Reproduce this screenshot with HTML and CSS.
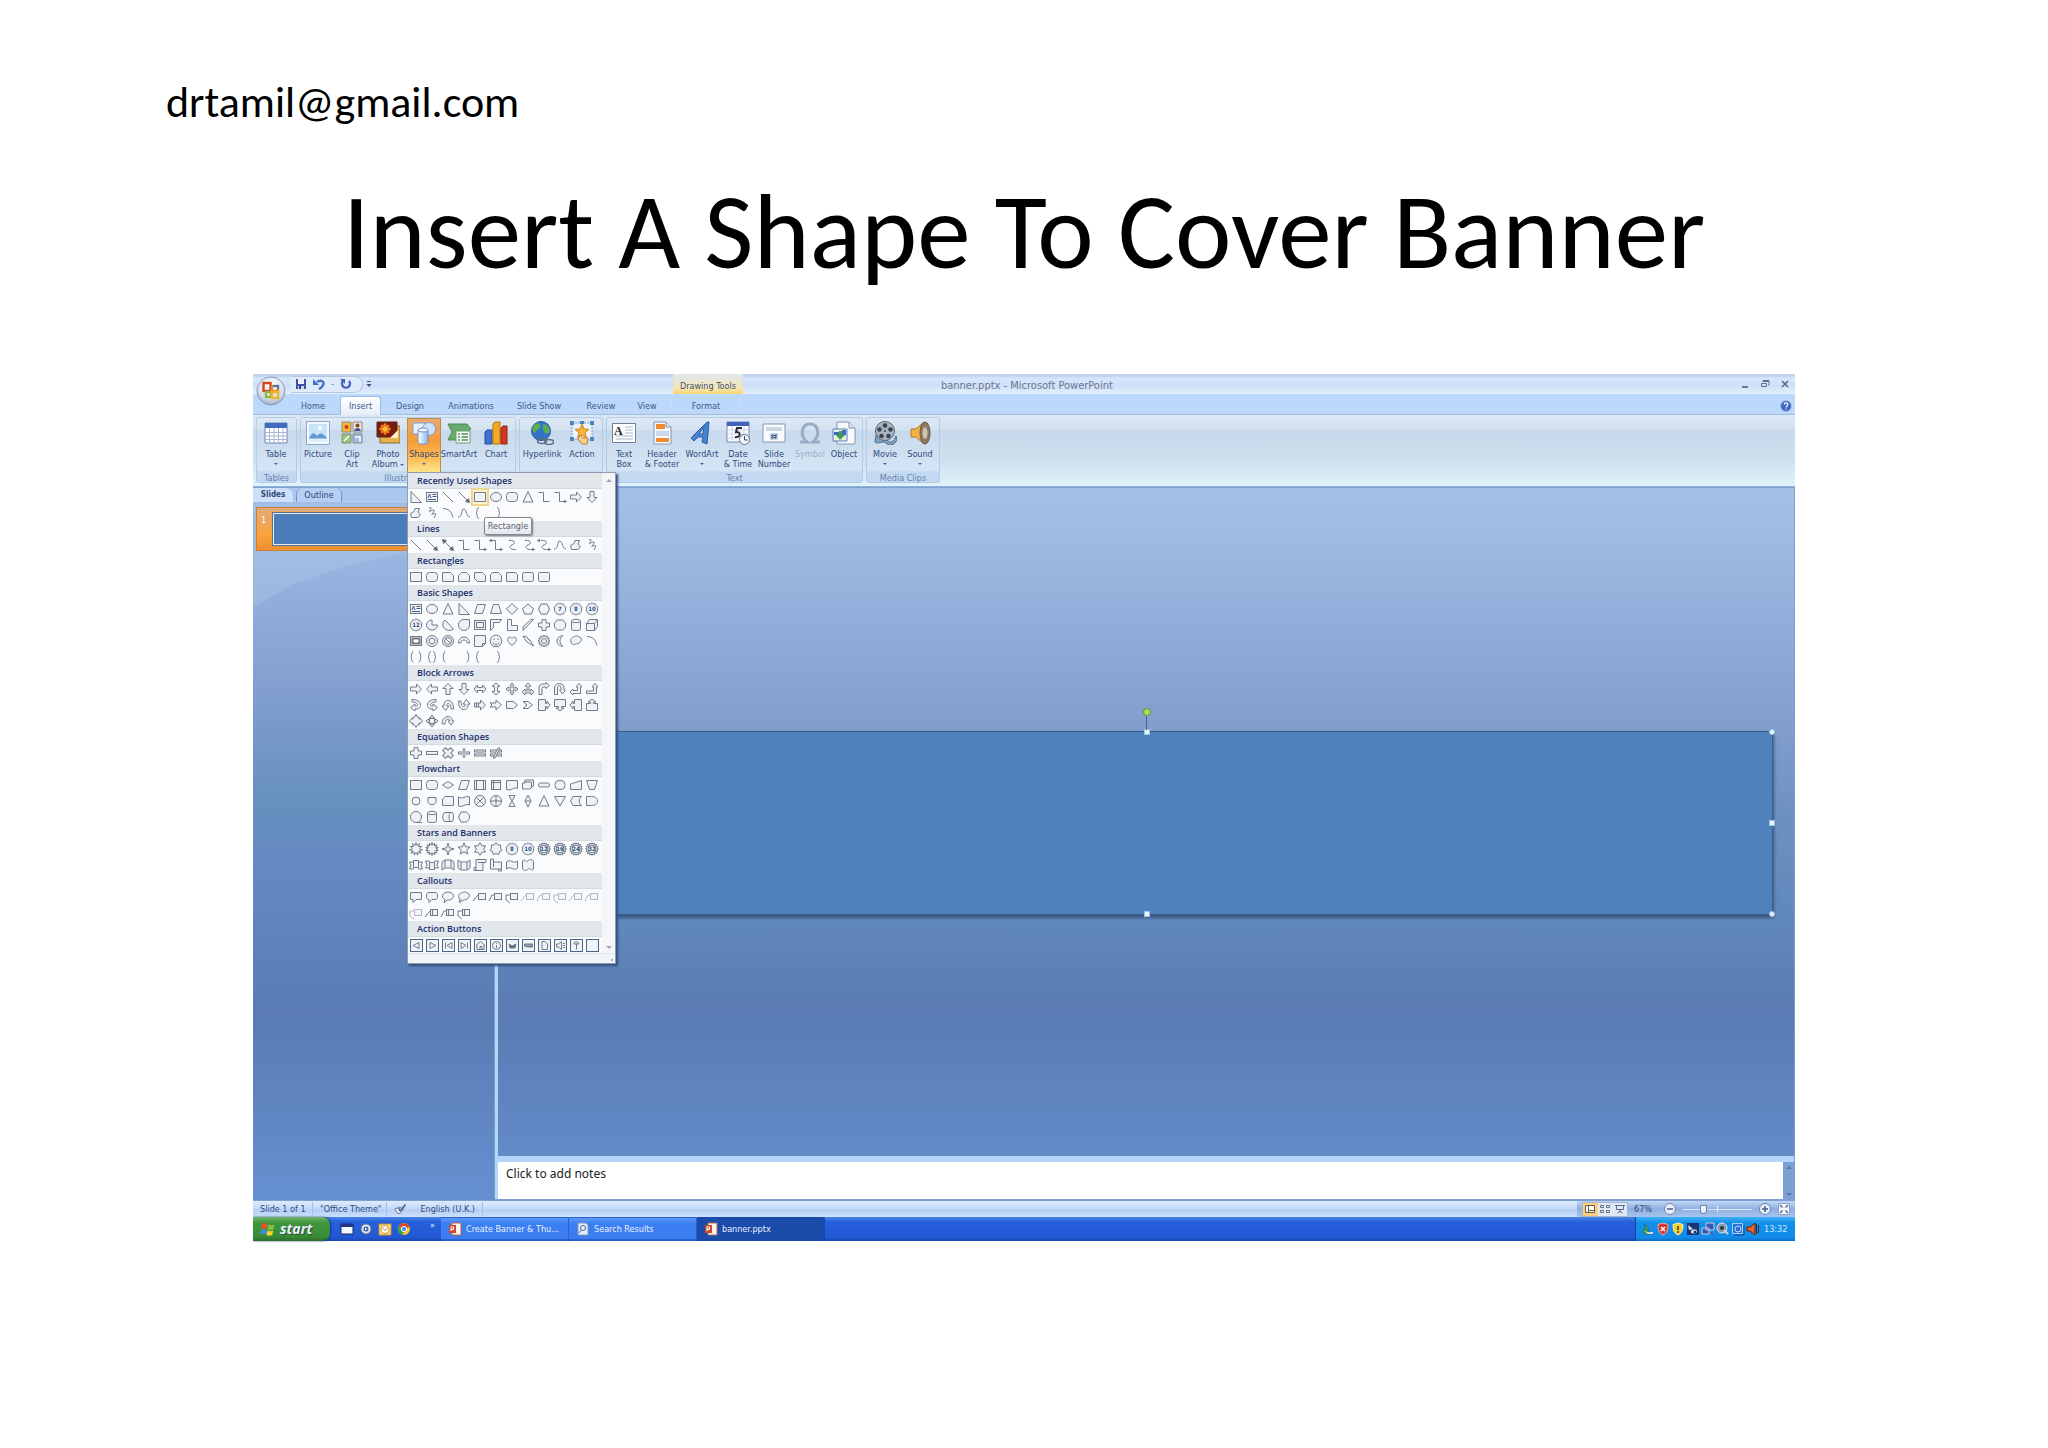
FILE: index.html
```html
<!DOCTYPE html>
<html lang="en">
<head>
<meta charset="utf-8">
<title>Insert A Shape To Cover Banner</title>
<link rel="stylesheet" href="styles.css">
</head>
<body>
<header class="page-head">
  <p class="contact">drtamil@gmail.com</p>
  <h1 class="headline">Insert A Shape To Cover Banner</h1>
</header>

<main class="window">
  <div class="titlebar">
    <button class="orb" aria-label="Office Button">
      <svg viewBox="0 0 30 30" width="30" height="30"><defs><radialGradient id="orb" cx=".5" cy=".3" r=".7"><stop offset="0" stop-color="#fff"/><stop offset=".7" stop-color="#d5dcea"/><stop offset="1" stop-color="#98a8c4"/></radialGradient></defs><circle cx="15" cy="15" r="14" fill="url(#orb)" stroke="#8c9dbb"/><g fill="none" stroke-width="2.4"><rect x="7.500" y="7" width="7" height="8" stroke="#d8451c"/><rect x="16" y="10" width="6" height="5" stroke="#e98b20"/><rect x="10" y="16" width="5" height="5" stroke="#8fb63a"/><rect x="16" y="16" width="6" height="6" stroke="#e9b62c"/></g><path d="M17 10h5v3" fill="none" stroke="#3c78c8" stroke-width="2"/></svg>
    </button>
    <div class="quick">
      <button aria-label="Save"><svg viewBox="0 0 12 12" width="12" height="12"><path d="M1 1h10v10H1z" fill="#3f51a8"/><path d="M3 1h6v5H3z" fill="#eef2fb"/><path d="M3 8h6v3H3z" fill="#cdd6ea"/><path d="M4 8h2v3H4z" fill="#2c3a80"/></svg></button>
      <button aria-label="Undo"><svg viewBox="0 0 12 12" width="12" height="12"><path d="M4 4c4-3 8 0 6 3-.6 1.500-2 3-4 4" fill="none" stroke="#4a6fc4" stroke-width="2.400"/><path d="M0 1v6h6z" fill="#4a6fc4"/></svg></button>
      <span class="dash">-</span>
      <button aria-label="Repeat"><svg viewBox="0 0 12 12" width="12" height="12"><path d="M3 3a4 4 0 1 0 6 0" fill="none" stroke="#4262c0" stroke-width="2.400"/><path d="M0 1h5v5z" fill="#4262c0"/></svg></button>
    </div>
    <button class="more" aria-label="Customize toolbar"><svg viewBox="0 0 8 8" width="8" height="8"><path d="M2 1.500h4" stroke="#35507c"/><path d="M1.500 4h5L4 7z" fill="#35507c"/></svg></button>
    <div class="context">Drawing Tools</div>
    <div class="doc-title">banner.pptx - Microsoft PowerPoint</div>
    <div class="win-buttons">
      <button aria-label="Minimize"><svg viewBox="0 0 10 10" width="10" height="10"><path d="M2 8h6" stroke="#47536b" stroke-width="1.500"/></svg></button>
      <button aria-label="Restore"><svg viewBox="0 0 10 10" width="10" height="10"><path d="M3 3V2h6v4H8M1.500 4.500h5v3h-5z" fill="none" stroke="#66718a"/><path d="M3 2h6" stroke="#66718a" stroke-width="2"/></svg></button>
      <button aria-label="Close"><svg viewBox="0 0 10 10" width="10" height="10"><path d="M2 2l6 6M8 2L2 8" stroke="#5a667f" stroke-width="1.500"/></svg></button>
    </div>
  </div>

  <nav class="tabs">
    <button>Home</button><button class="active">Insert</button><button class="t-design">Design</button><button class="t-anim">Animations</button><button class="t-show">Slide Show</button><button class="t-review">Review</button><button>View</button><button class="t-format">Format</button>
    <button class="help" aria-label="Help"><svg viewBox="0 0 12 12" width="12" height="12"><circle cx="6" cy="6" r="5.500" fill="#3c68c0" stroke="#a9c2ea"/><path d="M4.200 4.600c0-2.300 3.600-2.200 3.600 0C7.800 6 6 6 6 7.400M6 8.400v1.200" fill="none" stroke="#fff" stroke-width="1.200"/></svg></button>
  </nav>

  <div class="ribbon">
    <section class="group g-tables">
      <div class="tools">
        <button class="w38"><svg viewBox="0 0 24 24"><path d="M1 2h22v20H1z" fill="#fff" stroke="#6b86b8"/><path d="M1 2h22v5H1z" fill="#3d6cc0"/><path d="M1 11.500h22M1 15h22M1 18.500h22M5.500 7v15M10 7v15M14.500 7v15M19 7v15" stroke="#a9b9d4"/></svg><span>Table</span><i class="caret"></i></button>
      </div>
      <div class="label">Tables</div>
    </section>
    <section class="group g-illus">
      <div class="tools">
        <button class="w34"><svg viewBox="0 0 24 24"><path d="M.5.5h23v23H.5z" fill="#f5f9ff" stroke="#8ba6cf"/><path d="M3 3h18v18H3z" fill="#c9e4f8"/><path d="M3 17c3-6 5-6 8-2 3-4 6-3 10 2v1H3z" fill="#5f9bd0"/><path d="M3 17.500h18V21H3z" fill="#dff0f8"/><circle cx="14" cy="7" r="2" fill="#fff"/></svg><span>Picture</span></button>
        <button class="w34"><svg viewBox="0 0 24 24"><g stroke="#8c8c7c"><path d="M2 1h9v10H2z" fill="#f6b438"/><path d="M13 1h9v10h-9z" fill="#f1e3d0"/><path d="M2 13h9v9H2z" fill="#8fc97a"/><path d="M13 13h9v9h-9z" fill="#9db8ee"/></g><circle cx="6.500" cy="6" r="2" fill="#d23c18"/><circle cx="17.500" cy="4.500" r="2" fill="#7c4a2c"/><path d="M14 10c1-4 6-4 7 0z" fill="#3458a8"/><path d="M4 20l5-5M15 16h5v5" stroke="#fff" fill="none" stroke-width="1.500"/></svg><span>Clip<br>Art</span></button>
        <button class="w38"><svg viewBox="0 0 24 24"><path d="M4 5h20v17H4z" fill="#e9b24c" stroke="#8c6a3a"/><path d="M1 1h20v15H1z" fill="#7a1d10" stroke="#5c2414"/><circle cx="9" cy="8" r="5" fill="#e8541a"/><circle cx="9" cy="8" r="2.500" fill="#ffd84a"/><path d="M9 2v12M3 8h12M5 4l8 8M13 4l-8 8" stroke="#f8b030"/><path d="M14 17l8-8v8z" fill="#fbf0d2"/></svg><span>Photo<br>Album <i class="caret inline"></i></span></button>
        <div class="menu-anchor">
          <button class="w34 pressed" aria-expanded="true"><svg viewBox="0 0 24 24"><defs><linearGradient id="cyl"><stop offset="0" stop-color="#fff"/><stop offset="1" stop-color="#8fb4e4"/></linearGradient></defs><path d="M1 2h12v11H1z" fill="#e6f0fc" stroke="#7e9fd0"/><circle cx="17" cy="8" r="6.500" fill="#cfe2f9" stroke="#7e9fd0"/><path d="M6 9v12c0 3 10 3 10 0V9z" fill="url(#cyl)" stroke="#6d92c9"/><ellipse cx="11" cy="9" rx="5" ry="2" fill="#f4f9ff" stroke="#6d92c9"/></svg><span>Shapes</span><i class="caret"></i></button>
          <div class="gallery">
            <div class="gallery-body">
              <div class="gallery-list" id="gallery"></div>
              <div class="gallery-scroll"><i class="up"></i><i class="down"></i></div>
            </div>
            <div class="gallery-grip"></div>
            <div class="tooltip" role="tooltip">Rectangle</div>
          </div>
        </div>
        <button class="w36"><svg viewBox="0 0 24 24"><path d="M1 3h19l4 5-4 3v8H1l4-8z" fill="#68ab6c" stroke="#4c8a55"/><path d="M9 10h14v12H9z" fill="#f4faf4" stroke="#6b9c70"/><path d="M11 13h2m1.500 0H21m-10 3h2m1.500 0H21m-10 3h2m1.500 0H21" stroke="#57905e" stroke-width="1.300"/></svg><span>SmartArt</span></button>
        <button class="w38"><svg viewBox="0 0 24 24"><path d="M1 11l2-2h5v14H1z" fill="#3f72cc" stroke="#274f9c"/><path d="M9 3l2-2h5v22H9z" fill="#f2aa22" stroke="#b8730a"/><path d="M17 7l2-2h4v18h-6z" fill="#d2381e" stroke="#96200e"/></svg><span>Chart</span></button>
      </div>
      <div class="label">Illustrations</div>
    </section>
    <section class="group g-links">
      <div class="tools">
        <button class="w44"><svg viewBox="0 0 24 24"><circle cx="11" cy="10" r="9.500" fill="#3273c8" stroke="#2a5ea8"/><path d="M5 3c4-2 6 0 5 3s-4 3-5 6c-3-2-4-5 0-9zM13 3c4 0 7 4 7 8l-4 2-3-4z" fill="#5cae4c"/><g stroke="#5f6f88" stroke-width="1.500"><ellipse cx="12" cy="20" rx="4.500" ry="2.500" fill="none"/><ellipse cx="19" cy="21" rx="4.500" ry="2.500" fill="none"/></g></svg><span>Hyperlink</span></button>
        <button class="w36"><svg viewBox="0 0 24 24"><path d="M2 2h20v16H2z" fill="#eaf2fc" stroke="#7a9cc9" stroke-dasharray="2 1"/><path d="M12 3l2 5 5 .4-4 3.300 1.500 5L12 14l-4.500 2.700 1.500-5-4-3.300L10 8z" fill="#fbb33b" stroke="#d5861b"/><g fill="#4c86c0"><path d="M0 0h4v4H0zM20 0h4v4h-4zM0 16h4v4H0zM20 16h4v4h-4zM10 0h4v3h-4z"/></g><path d="M10 14l3 3h5l-1 6h-5l-4-5z" fill="#f8d190" stroke="#b9812e"/></svg><span>Action</span></button>
      </div>
      <div class="label">Links</div>
    </section>
    <section class="group g-text">
      <div class="tools">
        <button class="w34"><svg viewBox="0 0 24 24"><path d="M.5 2.500h23v19H.5z" fill="#fff" stroke="#6d7f9c"/><path d="M13 6h8M13 9h8M13 12h8M4 15h17M4 18h17" stroke="#d2dae6" stroke-width="2"/><text x="2" y="14" class="glyph-a">A</text></svg><span>Text<br>Box</span></button>
        <button class="w42"><svg viewBox="0 0 24 24"><path d="M4 1h12l5 5v17H4z" fill="#f5f8fc" stroke="#8496b4"/><path d="M6 3h9v5H6zM6 17h13v4H6z" fill="#ef8c32"/><path d="M6 10h13v5H6z" fill="#ccd8ea"/><path d="M16 1v5h5" fill="#dfe8f5" stroke="#8496b4"/></svg><span>Header<br>&amp; Footer</span></button>
        <button class="w38"><svg viewBox="0 0 24 24"><path d="M1 17L17 1h2l-2 22-5-2 1-5H8l-4 4zm8-4h4l1-7z" fill="#4a83d0" stroke="#2c5da4"/></svg><span>WordArt</span><i class="caret"></i></button>
        <button class="w34"><svg viewBox="0 0 24 24"><path d="M1 1h22v20H1z" fill="#fdfdff" stroke="#7288b2"/><path d="M1 1h22v4H1z" fill="#3e62be"/><path d="M1 9h22M1 13h22M1 17h22M6 5v16M18 5v16" stroke="#cbd5e6"/><path d="M16 7h-5l-1 4c5-1 5 6-1 5" fill="none" stroke="#2a2a38" stroke-width="2"/><circle cx="18.500" cy="18.500" r="5" fill="#f3f6fb" stroke="#64748e"/><path d="M18.500 15v4h3" fill="none" stroke="#445"/></svg><span>Date<br>&amp; Time</span></button>
        <button class="w38"><svg viewBox="0 0 24 24"><path d="M1 3h22v18H1z" fill="#f8fafd" stroke="#8596b4"/><path d="M4 6h16v4H4z" fill="#ccd5e3"/><path d="M8 12h8v7H8z" fill="#c9d6ea"/><path d="M11 13l-1 5m4-5l-1 5M9 14.500h6M9 16.500h6" stroke="#50658c"/></svg><span>Slide<br>Number</span></button>
        <button class="w34" disabled><svg viewBox="0 0 24 24"><path d="M2 21h7c-8-7-5-18 3-18s11 11 3 18h7" fill="none" stroke="#98abc6" stroke-width="3"/></svg><span>Symbol</span></button>
        <button class="w34"><svg viewBox="0 0 24 24"><path d="M5 1h12l6 6v16H5z" fill="#f7f9fd" stroke="#8094b6"/><path d="M17 1v6h6" fill="#dce6f5" stroke="#8094b6"/><path d="M1 8h14v12H1z" fill="#e9f0e8" stroke="#5b7dbc"/><path d="M2 11h5v3H2zM10 9h4v5h-4z" fill="#3f6cc0"/><path d="M7 10h3v4h3l-5 5-4-5h3z" fill="#41a046"/></svg><span>Object</span></button>
      </div>
      <div class="label">Text</div>
    </section>
    <section class="group g-media">
      <div class="tools">
        <button class="w36"><svg viewBox="0 0 24 24"><path d="M3 14c3 6 8 1 11 5s7 2 9-4l1 4c-3 6-8 6-11 3s-8 2-11-1z" fill="#7fa3c0" stroke="#4a6d8c"/><circle cx="12" cy="10" r="9.500" fill="#aab4c0" stroke="#5d6877"/><g fill="#39424f"><circle cx="12" cy="4.500" r="2.300"/><circle cx="6.500" cy="8.500" r="2.300"/><circle cx="17.500" cy="8.500" r="2.300"/><circle cx="8.500" cy="15" r="2.300"/><circle cx="15.500" cy="15" r="2.300"/><circle cx="12" cy="10" r="1"/></g></svg><span>Movie</span><i class="caret"></i></button>
        <button class="w34"><svg viewBox="0 0 24 24"><path d="M3 8h5l8-7v22l-8-7H3z" fill="#f1b440" stroke="#b07a22"/><ellipse cx="17" cy="12" rx="5" ry="11" fill="#8b7b66" stroke="#655846"/><ellipse cx="17" cy="12" rx="2.500" ry="6" fill="#d0c3ac"/></svg><span>Sound</span><i class="caret"></i></button>
      </div>
      <div class="label">Media Clips</div>
    </section>
  </div>

  <div class="workspace">
    <aside class="slides-pane">
      <div class="pane-tabs"><button class="active">Slides</button><button>Outline</button></div>
      <div class="slide-item"><span class="number">1</span><div class="thumb"></div></div>
    </aside>
    <div class="editor">
      <div class="canvas">
        <div class="shape">
          <i class="handle n"></i><i class="handle ne"></i><i class="handle e"></i><i class="handle se"></i><i class="handle s"></i><i class="rotate"></i>
        </div>
      </div>
      <div class="notes"><textarea aria-label="Notes">Click to add notes</textarea><div class="notes-scroll"><i class="up"></i><i class="down"></i></div></div>
    </div>
  </div>

  <div class="statusbar">
    <span class="cell c-slide">Slide 1 of 1</span>
    <span class="cell c-theme">"Office Theme"</span>
    <span class="cell c-lang"><svg viewBox="0 0 14 12" width="14" height="12"><path d="M1 6l5-2 5 2-4 5H4z" fill="#e6edf8" stroke="#5f7096"/><path d="M5 5l2 3 6-7" fill="none" stroke="#44557e" stroke-width="1.600"/></svg>English (U.K.)</span>
    <div class="status-right">
      <div class="views">
        <button class="on" aria-label="Normal"><svg viewBox="0 0 12 10" width="12" height="10"><path d="M1.500 1.500h9v7h-9zM4.500 1.500v7M4.500 6.500h6" fill="#fff" stroke="#6a5a48"/></svg></button>
        <button aria-label="Slide Sorter"><svg viewBox="0 0 12 10" width="12" height="10"><path d="M1.500 1.500h3v2h-3zM7.500 1.500h3v2h-3zM1.500 6.500h3v2h-3zM7.500 6.500h3v2h-3z" fill="#fff" stroke="#5c6c8a"/></svg></button>
        <button aria-label="Slide Show"><svg viewBox="0 0 12 10" width="12" height="10"><path d="M1 1.500h10M2.500 1.500v4h7v-4M6 5.500v2M3.500 9L6 7.500 8.500 9" fill="none" stroke="#5c6c8a"/></svg></button>
      </div>
      <span class="percent">67%</span>
      <button class="zoom-btn" aria-label="Zoom out"><svg viewBox="0 0 12 12" width="12" height="12"><circle cx="6" cy="6" r="5.500" fill="#e7effb" stroke="#6c82ad"/><path d="M3 6h6" stroke="#46598a" stroke-width="1.500"/></svg></button>
      <input class="zoom-range" type="range" min="0" max="100" value="28" aria-label="Zoom">
      <button class="zoom-btn" aria-label="Zoom in"><svg viewBox="0 0 12 12" width="12" height="12"><circle cx="6" cy="6" r="5.500" fill="#e7effb" stroke="#6c82ad"/><path d="M3 6h6M6 3v6" stroke="#46598a" stroke-width="1.500"/></svg></button>
      <button class="zoom-btn fit" aria-label="Fit slide"><svg viewBox="0 0 12 12" width="12" height="12"><path d="M.5.5h11v11H.5z" fill="#f2f6fc" stroke="#8fa1c4"/><path d="M2 2l2.500 2.500M10 2L7.500 4.500M2 10l2.500-2.500M10 10L7.500 7.500" stroke="#4b5f8c" stroke-width="1.300"/></svg></button>
    </div>
  </div>

  <footer class="taskbar">
    <button class="start"><svg viewBox="0 0 16 16" width="16" height="16"><path d="M2 3c2-1.500 4-1 5.500 0l-1 5C5 7 3 7 1 8z" fill="#e8532a"/><path d="M8.500 3.500c2 1 4 1 6 0l-1 5c-2 1-4 1-6 0z" fill="#7cc043"/><path d="M1 9c2-1 4-1 5.500 0l-1 4.500c-2-1-3.500-1-5 0z" fill="#3f8bea"/><path d="M7.300 9.500c2 1 4 1 6 0l-1 4.500c-2 1-4 1-6 0z" fill="#f8cf3a"/></svg>start</button>
    <div class="launch">
      <button aria-label="Show desktop"><svg viewBox="0 0 14 14" width="14" height="14"><path d="M1 2h12v10H1z" fill="#f4f7ff" stroke="#1b2c66"/><path d="M1 2h12v3H1z" fill="#22357c"/></svg></button>
      <button aria-label="Media player"><svg viewBox="0 0 14 14" width="14" height="14"><circle cx="7" cy="7" r="5" fill="#dfe6ee" stroke="#6a7488"/><circle cx="7" cy="7" r="2.500" fill="#31549c"/><path d="M6 5.500L8.500 7 6 8.500z" fill="#fff"/></svg></button>
      <button aria-label="Mail"><svg viewBox="0 0 14 14" width="14" height="14"><path d="M1 2h12v11H1z" fill="#f6d989" stroke="#c68f2c"/><circle cx="7" cy="7.500" r="4" fill="#fff" stroke="#d99a28"/><path d="M4.500 6L7 8.500 9.500 6" fill="none" stroke="#b77a1c"/></svg></button>
      <button aria-label="Browser"><svg viewBox="0 0 14 14" width="14" height="14"><circle cx="7" cy="7" r="6" fill="#f3c72f"/><path d="M7 7L1.500 4.500A6 6 0 0 1 12.500 5z" fill="#dc4332"/><path d="M7 7l-1 6A6 6 0 0 1 1.500 4.500z" fill="#3ea14c"/><circle cx="7" cy="7" r="2.600" fill="#4a8af0" stroke="#fff"/></svg></button>
      <span class="chev">»</span>
    </div>
    <button class="task"><svg viewBox="0 0 14 14" width="14" height="14"><path d="M4 1h9v12H4z" fill="#fbf3ee" stroke="#b9694a"/><path d="M1 3h7v8H1z" fill="#d04a2a"/><path d="M3 9V5h2.500v2.500H3" fill="none" stroke="#fff"/></svg><span>Create Banner &amp; Thu...</span></button>
    <button class="task"><svg viewBox="0 0 14 14" width="14" height="14"><path d="M2 1h8l2 2v10H2z" fill="#e4edfa" stroke="#8297bc"/><circle cx="7" cy="6" r="2.500" fill="none" stroke="#4a6aa4"/><path d="M5 8l-2 3" stroke="#4a6aa4"/></svg><span>Search Results</span></button>
    <button class="task current"><svg viewBox="0 0 14 14" width="14" height="14"><path d="M4 1h9v12H4z" fill="#fbf3ee" stroke="#b9694a"/><path d="M1 3h7v8H1z" fill="#d04a2a"/><path d="M3 9V5h2.500v2.500H3" fill="none" stroke="#fff"/></svg><span>banner.pptx</span></button>
    <div class="tray">
      <svg viewBox="0 0 14 14"><path d="M3 2l5 5-3 1 6 4H4L2 8l3-1z" fill="#5fc069" stroke="#2c6b45"/><path d="M6 10h6v2H6z" fill="#cfd8e4"/></svg>
      <svg viewBox="0 0 14 14"><path d="M7 1l5 1.500C12 8 11 11 7 13 3 11 2 8 2 2.500z" fill="#d8342c" stroke="#f0b0aa"/><path d="M5 5l4 4M9 5L5 9" stroke="#fff" stroke-width="1.500"/></svg>
      <svg viewBox="0 0 14 14"><path d="M7 1l5 1.500C12 8 11 11 7 13 3 11 2 8 2 2.500z" fill="#f5d12e" stroke="#fbeeb0"/><path d="M7 4v4M7 9v2" stroke="#44390a" stroke-width="1.500"/></svg>
      <svg viewBox="0 0 14 14"><path d="M1 1h12v12H1z" fill="#1d3470"/><path d="M2 3l5 4-4 1zM5 9a3 2 0 1 0 6 1 3 2 0 1 0-6-1" fill="#dfe8f6"/><circle cx="9" cy="10" r="1.500" fill="#1d3470"/></svg>
      <svg viewBox="0 0 14 14"><path d="M5 1h8v7H5zM1 6h7v6H1z" fill="#3556b8" stroke="#c6d2ea"/><path d="M9 10l3 2" stroke="#b33"/></svg>
      <svg viewBox="0 0 14 14"><circle cx="6" cy="6" r="5" fill="#8a97a6" stroke="#e3e8ee"/><circle cx="6" cy="6" r="2" fill="#2d3948"/><path d="M8 8l4 4" stroke="#cfd6df" stroke-width="2"/></svg>
      <svg viewBox="0 0 14 14"><path d="M1.500 1.500h10v10h-10z" fill="#2b6fd6" stroke="#9fd2ff"/><circle cx="7" cy="7" r="3" fill="none" stroke="#bfe2ff"/><path d="M3 13h10V4" fill="none" stroke="#1b3f8c"/></svg>
      <svg viewBox="0 0 14 14"><path d="M1 5h3l5-4v12L4 9H1z" fill="#e8632e" stroke="#5c2410"/><path d="M10.500 2v10M12.500 3v8" stroke="#2c2c38"/></svg>
      <time>13:32</time>
    </div>
  </footer>
</main>
<script src="gallery.js"></script>
</body>
</html>
```
FILE: styles.css
```css
* { box-sizing: border-box; }
body { margin: 0; background: #fff; font-family: "DejaVu Sans Condensed", "DejaVu Sans", sans-serif; font-size: 9px; line-height: 10px; color: #2f4a80; }
button { margin: 0; padding: 0; border: 0; background: none; font: inherit; color: inherit; }
button svg { display: block; flex: none; }
i { font-style: normal; }

.page-head { height: 374px; padding: 78px 166px 0; font-family: Carlito, Lato, sans-serif; color: #000; }
.contact { margin: 0; font-size: 44px; line-height: 48px; }
.headline { margin: 46px 0 0; font-size: 107px; line-height: 120px; font-weight: 400; text-align: center; white-space: nowrap; }

.window { margin: 0 253px 208px; }

.titlebar { position: relative; display: flex; align-items: center; height: 20px; background: linear-gradient(#bfd3ee 0, #bfd3ee 2px, #d6e6fa 4px, #cfdff8 12px, #e2f0fd); }
.orb { position: absolute; left: 3px; top: 2px; z-index: 2; }
.quick { display: flex; align-items: center; gap: 6px; height: 17px; margin-left: 38px; padding: 0 10px 0 4px; border: 1px solid #b3c8e6; border-left: 0; border-radius: 0 9px 9px 0; background: #dfebfa; }
.dash { color: #5b75a6; }
.more { margin-left: 2px; }
.context { align-self: stretch; margin-left: 300px; width: 70px; padding-top: 7px; text-align: center; background: linear-gradient(#dfe6ee, #f3e6b8 70%, #fbd66a); color: #47506a; }
.doc-title { margin: 3px 0 0 198px; font-size: 11px; color: #6a7690; white-space: nowrap; }
.win-buttons { display: flex; gap: 10px; margin-left: auto; padding-right: 5px; }

.tabs { display: flex; align-items: flex-end; height: 21px; padding: 2px 3px 0 40px; background: #bcd8fb; border-bottom: 1px solid #9fbfe6; color: #41588a; }
.tabs button { width: 40px; height: 17px; }
.tabs .active { width: 41px; margin: 0 0 -1px 7px; height: 19px; border: 1px solid #9dbbe2; border-bottom: 0; border-radius: 3px 3px 0 0; background: linear-gradient(#fff, #e4eefa); }
.tabs .t-design { width: 58px; }
.tabs .t-anim { width: 64px; }
.tabs .t-show { width: 72px; }
.tabs .t-review { width: 52px; }
.tabs .t-format { width: 70px; margin-left: 4px; border: 1px solid #cddcf0; border-width: 0 1px; }
.tabs .help { width: 12px; margin-left: auto; }

.ribbon { display: flex; gap: 3px; height: 72px; padding: 2px 3px 3px; border-bottom: 1px solid #8fb2dd; background: linear-gradient(#dbe7f5 0, #d2e0f0 14px, #c6d8ea 16px, #d0e0f0 45px, #e0f2fb); }
.group { display: flex; flex-direction: column; border: 1px solid #b5cce6; border-radius: 3px; background: linear-gradient(#dde9f6 0, #d4e1f0 12px, #c7d9ec 13px, #d6e5f5 52px, #c3d9f1 54px, #c3d9f1); }
.g-tables { width: 41px; }
.g-illus { width: 216px; }
.g-links { width: 84px; }
.g-text { width: 257px; }
.g-media { width: 74px; }
.tools { display: flex; height: 54px; }
.tools > button, .menu-anchor > button { display: flex; flex-direction: column; align-items: center; height: 54px; padding-top: 3px; white-space: nowrap; }
.tools > button svg, .menu-anchor > button svg { width: 24px; height: 24px; margin-bottom: 4px; }
.tools > button:disabled { color: #9fb0ca; }
.label { height: 12px; line-height: 12px; text-align: center; color: #6482b0; }
.w34 { width: 34px; }
.w36 { width: 36px; }
.w38 { width: 38px; }
.w42 { width: 42px; }
.w44 { width: 44px; }
.menu-anchor > .pressed { border: 1px solid #b98d4f; border-bottom: 0; padding-top: 2px; background: linear-gradient(#e9a96c, #f89a3a 40%, #fdb64e 70%, #fde58a); }
.caret { width: 0; height: 0; margin-top: 4px; border: 2px solid transparent; border-top-color: #47629a; border-bottom: 0; }
.caret.inline { display: inline-block; vertical-align: middle; margin: 0; }
.glyph-a { font: bold 12px "Liberation Serif", serif; fill: #222; }

.menu-anchor { position: relative; }
.gallery { position: absolute; left: 0; top: 54px; z-index: 5; width: 209px; border: 1px solid #8f9bb0; background: #fafbfc; box-shadow: 2px 2px 2px #33507f; }
.gallery-body { display: flex; }
.gallery-list { width: 194px; }
.gallery h2 { margin: 0; padding-left: 9px; height: 16px; font: 600 9px/16px "Open Sans", sans-serif; color: #1c2f70; background: #e2e7ec; border-bottom: 1px solid #d3dae2; }
.cells { display: grid; grid-template-columns: repeat(12, 16px); grid-auto-rows: 16px; }
.cells button { width: 16px; height: 16px; }
.cells svg { width: 16px; height: 16px; fill: #edf3f9; stroke: #737b88; stroke-width: 1; }
.cells text { font: bold 6px "DejaVu Sans Condensed", sans-serif; fill: #2c5078; stroke: none; text-anchor: middle; }
.cells .selected { outline: 2px solid #ecd590; outline-offset: -1px; background: #fdf3cf; }
.gallery-scroll { flex: 1; display: flex; flex-direction: column; justify-content: space-between; align-items: center; padding: 6px 0 4px; background: #f3f5f7; }
.up, .down { width: 0; height: 0; border: 3px solid transparent; }
.up { border-bottom-color: #9ba3af; border-top: 0; }
.down { border-top-color: #9ba3af; border-bottom: 0; }
.gallery-grip { height: 10px; background: radial-gradient(circle, #a3abb8 1px, transparent 1px) right 1px bottom 1px / 4px 4px no-repeat, #f1f4f8; border-top: 1px solid #e0e5eb; }
.tooltip { position: absolute; left: 76px; top: 44px; width: 48px; height: 18px; border: 1px solid #85888f; border-radius: 2px; background: linear-gradient(#fff, #e2e6f0); box-shadow: 1px 1px 2px #777; font-size: 9px; line-height: 17px; text-align: center; color: #5b5f6a; }

.workspace { display: flex; height: 713px; background: linear-gradient(#a5c1ea 0, #8faad6 22%, #7f9ccb 35%, #6d90c2 46%, #6189bb 60%, #5a7bb3 74%, #6590d0); }
.slides-pane { position: relative; width: 241px; overflow: hidden; background: linear-gradient(#a5c1ea 0, #829fcf 28%, #6690bf 44%, #658ac2 52%, #5a7bb3 74%, #6590d0); }
.slides-pane::after { content: ""; position: absolute; left: 0; top: 64px; width: 160px; height: 56px; background: linear-gradient(#c4d8f533, #c4d8f533); clip-path: polygon(0 0, 100% 0, 60% 25%, 25% 60%, 0 100%); }
.pane-tabs { display: flex; height: 15px; background: #a9c6ee; border-top: 1px solid #7f9fce; border-bottom: 1px solid #bcd3f2; }
.pane-tabs button { width: 46px; height: 14px; color: #31487c; }
.pane-tabs button + button { border: 1px solid #7795c6; border-width: 0 1px; border-radius: 6px 6px 0 0; background: #b6cff2; }
.pane-tabs .active { width: 40px; background: #cfe1fa; font-weight: bold; font-size: 8px; border-radius: 0 8px 0 0; margin-right: 3px; }
.slide-item { display: flex; margin: 5px 0 0 3px; height: 44px; padding: 5px 0 5px 4px; border: 1px solid #c9803a; border-right: 0; background: linear-gradient(#e0a878, #fba23e 60%, #f09030); }
.number { width: 12px; padding-top: 2px; color: #fff; }
.thumb { flex: 1; border: 1px solid #e7edf5; outline: 1px solid #5a6f96; background: #4a7ebb; }
.editor { flex: 1; display: flex; flex-direction: column; border-left: 4px solid #b4d5f9; outline: 1px solid #7d9fcf; outline-offset: -1px; }
.canvas { flex: 1; padding: 244px 22px 0; }
.shape { position: relative; height: 184px; border: 1px solid #385d8a; background: #4f81bd; box-shadow: 1px 3px 3px #3c5780; }
.handle { position: absolute; width: 6px; height: 6px; background: #e3f6fd; border: 1px solid #9fc4dd; }
.n, .s { left: 50%; margin-left: -3px; }
.n, .ne { top: -3px; }
.s, .se { bottom: -3px; }
.ne, .e, .se { right: -3px; }
.e { top: 50%; margin-top: -3px; }
.ne, .se { border-radius: 50%; }
.rotate { position: absolute; left: 50%; top: -24px; width: 8px; height: 8px; margin-left: -4px; border: 1px solid #5b9438; border-radius: 50%; background: #a4e454; }
.rotate::after { content: ""; position: absolute; left: 2px; top: 7px; width: 1px; height: 14px; background: #4a648c; }
.notes { display: flex; height: 44px; border-top: 6px solid #b4d5f9; }
.notes textarea { flex: 1; border: 0; padding: 4px 8px; resize: none; overflow: hidden; background: #fff; font: 12px/16px "Noto Sans", sans-serif; color: #222; }
.notes-scroll { width: 12px; display: flex; flex-direction: column; justify-content: space-between; align-items: center; padding: 4px 0; background: #7b9fd0; }
.notes-scroll .up { border-bottom-color: #5579af; }
.notes-scroll .down { border-top-color: #5579af; }

.statusbar { display: flex; align-items: center; height: 17px; background: linear-gradient(#deebfc, #c3d8f8 50%, #b3cdf4 55%, #cfe0fb); border-top: 1px solid #7c9ed0; }
.cell { display: flex; align-items: center; gap: 14px; height: 14px; padding: 0 7px; border-right: 1px solid #a5bfe6; white-space: nowrap; }
.c-slide { width: 60px; }
.c-theme { width: 74px; }
.c-lang { width: 96px; }
.status-right { display: flex; align-items: center; height: 16px; width: 218px; margin-left: auto; padding: 0 5px; background: linear-gradient(#c2d7f6, #8eaee0 50%, #a9c5ef); }
.views { display: flex; width: 46px; border: 1px solid #a5b6d3; background: #dfe7f3; }
.views button { flex: 1; display: grid; place-items: center; height: 13px; }
.views .on { background: #fbcf7c; }
.percent { width: 36px; padding-left: 6px; }
.zoom-range { flex: 1; min-width: 0; height: 12px; margin: 0 7px; appearance: none; background: linear-gradient(#eef4fd, #eef4fd) center / 1px 6px no-repeat, linear-gradient(#dbe8fa, #dbe8fa) center / 100% 1px no-repeat; }
.zoom-range::-webkit-slider-thumb { appearance: none; width: 7px; height: 9px; border: 1px solid #6f83ad; border-radius: 1px 1px 4px 4px; background: #eaf1fb; }
.fit { margin-left: 7px; }

.taskbar { display: flex; align-items: stretch; height: 24px; background: linear-gradient(#4a86e4, #2560dc 20%, #2257d4 85%, #1b46b0); color: #e9f1ff; }
.start { display: flex; align-items: center; gap: 4px; width: 77px; padding-left: 7px; border-radius: 0 8px 8px 0; background: linear-gradient(#6fb56b, #3f963d 25%, #3a8c38 80%, #2c6d2c); box-shadow: 1px 0 2px #12347c; font: italic bold 14px/20px "Open Sans", sans-serif; text-shadow: 1px 1px 1px #234f23; }
.launch { display: flex; align-items: center; gap: 5px; width: 111px; padding-left: 10px; }
.chev { margin: 0 6px 8px auto; }
.task { display: flex; align-items: center; gap: 4px; width: 128px; padding-left: 7px; border: 1px solid #2a60cf; border-width: 1px 1px 2px 0; border-radius: 2px; background: linear-gradient(#5d9bf8, #3c7ff2 25%, #3b7cf0); white-space: nowrap; }
.task.current { background: #1c4cab; border-color: #1a48a6; }
.tray { display: flex; align-items: center; gap: 1px; width: 160px; margin-left: auto; padding-left: 5px; border-left: 1px solid #1042a0; background: linear-gradient(#3cb0f6, #1290e8 25%, #128bea 85%, #0f6fc4); color: #cfe6ff; }
.tray svg { width: 14px; height: 14px; flex: none; }
.tray time { margin-left: 3px; }
```
FILE: gallery.js
```js
// Shape outlines for the gallery, each drawn in a 16 by 16 box.
const p = (d, extra = '') => `<path d="${d}" ${extra}/>`;
const open = d => p(d, 'fill="none"');
const box = (x, y, w, h, r = 0) => `<rect x="${x}" y="${y}" width="${w}" height="${h}" rx="${r}"/>`;
const oval = (cx, cy, rx, ry, extra = '') => `<ellipse cx="${cx}" cy="${cy}" rx="${rx}" ry="${ry}" ${extra}/>`;
const burst = (n, outer, inner) => {
  const pts = [];
  for (let i = 0; i < n * 2; i++) {
    const r = i % 2 ? inner : outer, a = Math.PI * i / n - Math.PI / 2;
    pts.push((8 + r * Math.cos(a)).toFixed(1) + ',' + (8 + r * Math.sin(a)).toFixed(1));
  }
  return `<polygon points="${pts.join(' ')}"/>`;
};
const turn = (deg, s) => `<g transform="rotate(${deg} 8 8)">${s}</g>`;
const flip = s => `<g transform="matrix(-1 0 0 1 16 0)">${s}</g>`;
const num = n => burst(10, 6, 5.4) + `<text x="8" y="10">${n}</text>`;
const seal = n => burst(16, 6.4, 5) + oval(8, 8, 4, 4) + `<text x="8" y="10">${n}</text>`;

const line = open('M3 3l10 10'), head = p('M13.500 13.500l-4-1 3-3z', 'fill="#555c68"');
const lineArrow = line + head;
const doubleArrow = lineArrow + p('M2.500 2.500l4 1-3 3z', 'fill="#555c68"');
const elbow = open('M2.500 3.500h5v9h6');
const tip = p('M14.500 12.500l-2-1v2z', 'fill="#555c68"'), tail = p('M1.500 3.500l2-1v2z', 'fill="#555c68"');
const curl = open('M5 3.500c7-1 6 4 3 4.500s-3 5 4 4.500');
const triangle = p('M8 2.500l5 10.500h-10z'), rightTri = p('M3 2.500v11h10.500z');
const textBox = box(2.5, 3.5, 11, 9) + p('M4 9l1.500-4L7 9M8.500 5.500h4M8.500 7.500h4M4 10.500h8', 'stroke="#3e5f88"');
const ellipse = oval(8, 8, 5.5, 4.5), rounded = box(2.5, 3.5, 11, 9, 3), rect = box(2.5, 3.5, 11, 9);
const arrow = p('M2.500 6h6V3l5 5-5 5v-3h-6z');
const blob = p('M3.500 12.500l-1-4 3.500-2 1-3h4.500l-1.500 3.500 2.500 3-3 2.500z'), scribble = open('M5 3c5-2 0 4 0 4s6-4 5-1-4 4-1 3 4-1 1 4');
const arc = open('M3 3.500c6 0 9 4 10 9'), wave = open('M2 12c5 0 3-9 6-8s2 8 6 8');
const lb = open('M7 2.500c-3 0-1 5-3 5.500 2 .5 0 5.500 3 5.500'), rb = flip(lb);
const lp = open('M5.500 2.500c-3 1-3 10 0 11'), rp = flip(lp);
const hexa = p('M5 3h6l2.500 5-2.500 5H5L2.500 8z'), cross = p('M6 2.500h4V6h3.500v4H10v3.500H6V10H2.500V6H6z');
const can = p('M3.500 4v8c0 2 9 2 9 0V4') + oval(8, 4, 4.5, 1.7);
const two = p('M2 8l3.500-4v2.500h5V4L14 8l-3.500 4V9.500h-5V12z');
const four = p('M8 2l2 2.500H9V7h2.500V6L14 8l-2.500 2V9H9v2.500h1L8 14l-2-2.500h1V9H4.500v1L2 8l2.500-2v1H7V4.500H6z');
const bent = p('M3 13.500V7c0-3 2-4 4-4h3V1.500L13.500 4.500 10 7.500V6H8C6 6 6 7 6 8v5.500z');
const uturn = p('M2.500 13.500V7C2.500 1 12 1 12 7v2h1.500L10.500 13 7.500 9H9V7c0-3-3.500-3-3.500 0v6.500z');
const leftUp = p('M2 11l3-3v1.500h4.500V6H8l3-3.500L14 6h-1.500v6.500H5V14z');
const curved = p('M12 2.500C1 2 1 13 9 12v2l4.500-3.500L9 7v2C5 10 5 5 12 5z');
const callArrow = p('M2.500 2.500h7v4H11V4l3 4-3 4V9.500H9.500v4h-7z');
const doc = p('M2.500 3.500h11v8c-4-2-6 3-11 1z');
const callout = (s, tailPath) => s + open(tailPath);
const lineCall = k => box(6.5, 4.5, 7, 6) + open(k % 2 ? 'M6 6H4l-3 6' : 'M6 6l-5 6');
const faint = s => `<g opacity=".5">${s}</g>`;
const bentCall = box(6.5, 4.5, 7, 6) + open('M6 6H2v5l4 3');
const ribbon = p('M1.500 5h4V3.500h5V5h4l-1.500 3 1.500 4h-4v-1.500h-5V12h-4L3 8z') + open('M5.500 5v5M10.500 5v5');
const scroll = p('M4 2.500h10v3h-3v8H2v-3h2z') + open('M6 5.500h5M4 10.500v3');
const action = s => `<rect x="2.500" y="2.500" width="12" height="12" stroke="#4a6788"/>` + s;

const groups = {
  'Recently Used Shapes': [rightTri, textBox, line, lineArrow, rect, ellipse, rounded, triangle, elbow, elbow + tip, arrow, turn(90, arrow), blob, scribble, arc, wave, lb, rb],
  'Lines': [line, lineArrow, doubleArrow, elbow, elbow + tip, elbow + tip + tail, curl, curl + tip, curl + tip + tail, wave, blob, scribble],
  'Rectangles': [rect, rounded, p('M2.500 3.500h8l3 3v6h-11z'), p('M2.500 6.500l3-3h5l3 3v6h-11z'), p('M2.500 3.500h8l3 3v6h-8l-3-3z'), p('M2.500 5.500l2-2h6l3 3v6h-11z'), p('M2.500 3.500h9l2 2v7h-11z'), box(2.5, 3.5, 11, 9, 2), box(2.5, 3.5, 11, 9, 1)],
  'Basic Shapes': [textBox, ellipse, triangle, rightTri, p('M5.500 3.500h8l-3 9h-8z'), p('M5.500 3.500h5l3 9h-11z'), p('M8 2.500l5.500 5.500L8 13.500 2.500 8z'), p('M8 3l5.500 4.500-2 5.500h-7l-2-5.500z'), hexa, num(7), num(8), num(10),
    num(12), p('M8 3v5h5.500A5.500 5 0 1 1 8 3z'), p('M5 3a6 5.500 0 1 0 8.500 9z'), p('M13.500 2.500V8A5.500 5.500 0 1 1 8 2.500z'), box(2.5, 3.5, 11, 9) + box(4.5, 5.5, 7, 5), p('M2.500 2.500h11l-2 3h-6v5l-3 3z'), p('M3.500 2.500h4v6h6v5h-10z'), p('M11 2.500h2.500l-10.500 11V10z'), cross, p('M5 3h6l2.500 3v4L11 13H5l-2.500-3V6z'), can, p('M2.500 6.500h8v7h-8zM2.500 6.500l3-4h8v7l-3 4M10.500 6.500l3-4'),
    box(2.5, 3.5, 11, 9) + p('M4.500 5.500h7v5h-7z', 'fill="#fff" stroke-width="2"'), oval(8, 8, 5.5, 5.5) + oval(8, 8, 3, 3), oval(8, 8, 5.5, 5.5) + oval(8, 8, 3.5, 3.5) + open('M5.500 5.500l5 5'), p('M2.500 10c0-8 11-8 11 0h-2.500c0-4-6-4-6 0z'), p('M2.500 2.500h11v8l-3 3h-8zM10.500 13.500v-3h3'), oval(8, 8, 5.8, 5.8) + open('M5 9.500c1 3 5 3 6 0M6 5.500v1.500M10 5.500v1.500'), p('M8 12.500C0 7 5 1.500 8 5.500c3-4 8 1.500 0 7z'), p('M3 3l4 1 2 3 1 0 3.500 6-6.500-4-1-1z'), burst(12, 6, 4.2) + oval(8, 8, 2.5, 2.5), p('M11 2.500C3 3 3 13 11 13.500 7 11 7 5 11 2.500z'), p('M3 9C2 5 5 4 6 4c2-2 4-1 5 0 3 0 3 4 1 5-1 3-3 1-4 2-2 1-5 0-5-2z'), arc,
    lp + rp, lb + rb, lp, rp, lb, rb],
  'Block Arrows': [arrow, turn(180, arrow), turn(-90, arrow), turn(90, arrow), two, turn(90, two), four, p('M8 2l3 3H9v5h2V8l3 3-3 3v-2H5v2l-3-3 3-3v2h2V5H5z'), bent, uturn, leftUp, p('M2.500 10h7V6H8L11 2.500 14 6h-1.500v6.500h-10z'),
    flip(curved), curved, turn(90, curved), turn(-90, curved), arrow + open('M4.500 6v4M6.500 6v4'), p('M2 6h6V3l5.500 5L8 13v-3H2l2-2z'), p('M2.500 4.500h7L13.500 8l-4 3.500h-7z'), p('M3 4.500h5L12.500 8 8 11.500H3L7 8z'), callArrow, turn(90, callArrow), turn(180, callArrow), turn(-90, callArrow),
    p('M5 4h1.500L8 1.500 9.500 4H11v2h1V5l2.500 3-2.500 3v-1h-1v2H9.500L8 14.500 6.500 12H5v-2H4v1L1.500 8l2.500-3v1h1z'), four + box(5.5, 5.5, 5, 5), p('M2 11C2 2 12 1 12.500 8H14l-3 4-3-4h2C9 4 5 6 5 11z')],
  'Equation Shapes': [cross, box(2.5, 6.5, 11, 3), turn(45, cross), box(2.5, 7, 11, 2) + oval(8, 4.5, 1, 1) + oval(8, 11.5, 1, 1), box(2.5, 5, 11, 2) + box(2.5, 9, 11, 2), box(2.5, 5, 11, 2) + box(2.5, 9, 11, 2) + p('M5 13l5-10h2L7 13z')],
  'Flowchart': [rect, rounded, p('M8 4.500l5.500 3.500L8 11.500 2.500 8z'), p('M5.500 3.500h8l-3 9h-8z'), box(2.5, 3.5, 11, 9) + open('M4.500 3.500v9M11.500 3.500v9'), box(3.5, 3.5, 9, 9) + open('M5.500 3.500v9M3.500 5.500h9'), doc, p('M5 3h8.500v6l-2 1v1l-2 1h-7V6H5z') + open('M4 5h7.500v6'), box(2.5, 6, 11, 4, 2), box(3, 3.5, 10, 9, 4), p('M2.500 7l11-3.500v9h-11z'), p('M2.500 3.500h11l-3 9h-5z'),
    oval(8, 8, 4, 4), p('M4 4.500h8v5l-2 2H6l-2-2z'), p('M5 3.500h8.500v9h-11V6z'), p('M2.500 4c4 3 7-2 11 0v8c-4-2-7 3-11 1z'), oval(8, 8, 5.5, 5.5) + open('M4 4l8 8M12 4l-8 8'), oval(8, 8, 5.5, 5.5) + open('M8 2.500v11M2.500 8h11'), p('M5 2.500h6l-6 11h6z'), p('M8 2l3 6-3 6-3-6zM5 8h6'), triangle, p('M2.500 3.500h11L8 13z'), p('M5 3.500h8.500c-3 3-3 6 0 9H5L2.500 8z'), p('M2.500 3.500h5c8 0 8 9 0 9h-5z'),
    oval(8, 8, 5.5, 5.5) + open('M8 13.500h6'), can, p('M5 3.500h7c2 0 2 9 0 9H5c-3 0-3-9 0-9zM10.500 3.500c-2 2-2 7 0 9'), p('M5 3h5.500c4 3 4 7 0 10H5L2.500 8z')],
  'Stars and Banners': [burst(11, 6.5, 3.6), burst(14, 6.5, 4), burst(4, 6, 1.8), burst(5, 6.3, 2.8), burst(6, 6.3, 3.7), burst(7, 6.3, 4.4), num(8), num(10), seal(12), seal(16), seal(24), seal(32),
    ribbon, turn(180, ribbon), p('M2 5l3-2h6l3 2v8l-3-2H5l-3 2z') + open('M5 3v8M11 3v8'), p('M2 3l3 2h6l3-2v8l-3 2H5l-3-2z') + open('M5 5v8M11 5v8'), scroll, turn(-90, scroll), p('M2.500 5c4-4 7 3 11-1v7c-4 4-7-3-11 1z'), p('M2.500 4c2-3 4 2 5.500 0s3.500-2 5.500 0v8c-2 3-4-2-5.500 0s-3.500 2-5.500 0z')],
  'Callouts': [p('M2.500 3.500h11v7H8l-3 3v-3H2.500z'), p('M4 3.500h8l1.500 2v3l-1.500 2H8l-3 3v-3H4l-1.500-2v-3z'), p('M5 10.500C0 8 3 3 8 3s8 5 3 7.500c-2 1-3 .5-4 .5l-3 3z'), p('M3 9C1 5 5 4 6 4c2-2 4-1 5 0 3 0 3 4 1 5-1 3-3 1-4 2-2 1-5 0-5-2z') + oval(4, 12.5, 1, 1), lineCall(0), lineCall(1), bentCall, faint(lineCall(0)), faint(lineCall(1)), faint(bentCall), faint(lineCall(0)), faint(lineCall(1)),
    faint(bentCall), callout(lineCall(0), 'M8.500 4v7'), callout(lineCall(1), 'M8.500 4v7'), callout(bentCall, 'M8.500 4v7')],
  'Action Buttons': [p('M11 5.500v6l-6-3z'), p('M6 5.500v6l6-3z'), p('M12 5.500v6l-5-3z') + open('M5.500 5.500v6'), p('M5 5.500v6l5-3z') + open('M11.500 5.500v6'), p('M4 8.500l4.500-4 4.500 4h-1v4H5v-4zM8 12V9.500h2V12'), oval(8.5, 8.5, 4, 4) + p('M8.500 6v1M8.500 8v3'), p('M5 7l3 2 4-2-1 4H6z', 'fill="#5c6c80"'), p('M4.500 7h8v3h-5l-3-1z', 'fill="#8a98aa"'), p('M6 4.500h3l2.500 2.500v5.500H6z'), p('M4.500 7h2l3-2.500v8L6.500 10h-2zM11 6.500h2M11 8.500h2M11 10.500h2'), p('M8.500 12.500v-6M6 7c0-3 5-3 5 0z'), ''].map(action),
};

const root = document.getElementById('gallery');
for (const [title, shapes] of Object.entries(groups)) {
  const h = document.createElement('h2');
  h.textContent = title;
  const cells = document.createElement('div');
  cells.className = 'cells';
  cells.innerHTML = shapes.map((s, i) => `<button aria-label="${title} ${i + 1}"><svg viewBox="0 0 16 16">${s}</svg></button>`).join('');
  root.append(h, cells);
}
root.querySelectorAll('.cells button')[4].classList.add('selected');
```
